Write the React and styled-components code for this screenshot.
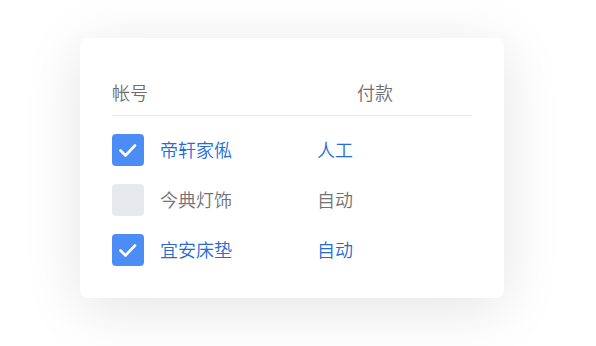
import React from "react";
import styled, { createGlobalStyle } from "styled-components";

const GlobalStyle = createGlobalStyle`
  html, body {
    margin: 0;
    padding: 0;
    background: #ffffff;
  }
  body {
    font-family: "Noto Sans CJK SC", "Noto Sans", sans-serif;
  }
`;

const Page = styled.div`
  width: 596px;
  height: 346px;
  padding: 38px 0 0 80px;
  box-sizing: border-box;
`;

const Card = styled.div`
  width: 424px;
  height: 260px;
  box-sizing: border-box;
  padding: 32px 32px 0;
  background: #ffffff;
  border-radius: 8px;
  box-shadow: 0 10px 60px rgba(0, 0, 0, 0.11);
`;

const Header = styled.div`
  display: flex;
  align-items: center;
  height: 43px;
  border-bottom: 1px solid #e6e7ea;
  color: #6e6e6e;
  font-size: 18px;
  font-weight: 350;
  line-height: 1;
  padding-bottom: 2px;
`;

const HeadCell = styled.div`
  width: ${(p) => p.width}px;
`;

const List = styled.div`
  display: flex;
  flex-direction: column;
  gap: 18px;
  padding-top: 18px;
`;

const Row = styled.div`
  display: flex;
  align-items: center;
  height: 32px;
  font-size: 18px;
  font-weight: 350;
  line-height: 1;
  color: ${(p) => (p.checked ? "#286bd6" : "#737373")};
`;

const Box = styled.div`
  width: 32px;
  height: 32px;
  border-radius: 4px;
  background: ${(p) => (p.checked ? "#4b8cf5" : "#e8e9ed")};
  display: flex;
  align-items: center;
  justify-content: center;
  margin-right: 16px;
  flex-shrink: 0;
`;

const Name = styled.div`
  width: 157px;
  padding-bottom: 2px;
`;

const Pay = styled.div`
  padding-bottom: 2px;
`;

const rows = [
  { name: "帝轩家俬", pay: "人工", checked: true },
  { name: "今典灯饰", pay: "自动", checked: false },
  { name: "宜安床垫", pay: "自动", checked: true },
];

const Check = () => (
  <svg width="32" height="32" viewBox="0 0 32 32">
    <path
      d="M8.5 16.5 L13.5 21.5 L23 11.5"
      fill="none"
      stroke="#ffffff"
      strokeWidth="2.6"
      strokeLinecap="round"
      strokeLinejoin="round"
    />
  </svg>
);

export default function App() {
  return (
    <Page>
      <GlobalStyle />
      <Card>
        <Header>
          <HeadCell width={245}>帐号</HeadCell>
          <HeadCell width={80}>付款</HeadCell>
        </Header>
        <List>
          {rows.map((r) => (
            <Row key={r.name} checked={r.checked}>
              <Box checked={r.checked}>{r.checked && <Check />}</Box>
              <Name>{r.name}</Name>
              <Pay>{r.pay}</Pay>
            </Row>
          ))}
        </List>
      </Card>
    </Page>
  );
}
